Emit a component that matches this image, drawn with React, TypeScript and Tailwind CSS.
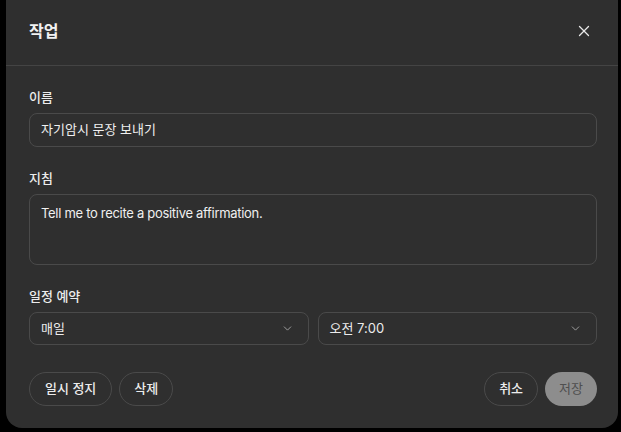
import { X, ChevronDown } from "lucide-react";

const font = { fontFamily: 'Inter, "Noto Sans CJK KR", sans-serif' };

function Field({ label, children }: { label: string; children: React.ReactNode }) {
  return (
    <div className="flex flex-col gap-[6px]">
      <div className="text-[13px] leading-[20px] font-medium text-[#ececec]">{label}</div>
      {children}
    </div>
  );
}

function SelectBox({ value }: { value: string }) {
  return (
    <div className="flex h-[33px] flex-1 items-center justify-between rounded-lg border border-[#4a4a4a] pl-[11px] pr-[14px] text-[13px] text-[#ececec]">
      <span>{value}</span>
      <ChevronDown size={13} strokeWidth={1.5} className="text-[#b4b4b4]" />
    </div>
  );
}

function Pill({ children, primary }: { children: React.ReactNode; primary?: boolean }) {
  return (
    <button
      className={
        primary
          ? "h-[34px] rounded-full bg-[#8d8d8d] px-[14px] text-[13px] text-[#4f4f4f]"
          : "h-[34px] rounded-full border border-[#4a4a4a] px-[14px] text-[13px] font-medium text-[#ececec]"
      }
    >
      {children}
    </button>
  );
}

export default function App() {
  return (
    <div className="h-[432px] w-[621px] overflow-hidden bg-black" style={font}>
      <div className="ml-[6px] flex h-[428px] w-[612px] flex-col rounded-b-2xl bg-[#2f2f2f]">
        {/* header */}
        <div className="flex h-[66px] shrink-0 items-center justify-between border-b border-[#444444] pb-[4px] pl-[23px] pr-[21px]">
          <h2 className="text-[16px] font-bold text-[#f2f2f2]">작업</h2>
          <button className="mr-[4px] text-[#e8e8e8]" aria-label="닫기">
            <X size={18} strokeWidth={1.75} />
          </button>
        </div>

        {/* body */}
        <div className="flex flex-1 flex-col pt-[21px] pb-[22px] pl-[23px] pr-[21px]">
          <div className="flex flex-col gap-[21px]">
            <Field label="이름">
              <div className="flex h-[34px] items-center rounded-lg border border-[#4a4a4a] px-[11px] text-[13px] text-[#f0f0f0]">
                자기암시 문장 보내기
              </div>
            </Field>
            <Field label="지침">
              <div className="h-[71px] rounded-lg border border-[#4a4a4a] px-[11px] pt-[9px] text-[13px] leading-[18px] tracking-[-0.3px] text-[#f0f0f0]">
                Tell me to recite a positive affirmation.
              </div>
            </Field>
            <Field label="일정 예약">
              <div className="flex gap-[9px]">
                <SelectBox value="매일" />
                <SelectBox value="오전 7:00" />
              </div>
            </Field>
          </div>

          <div className="mt-auto flex items-center justify-between">
            <div className="flex gap-[7px]">
              <Pill>
                <span className="px-[1px]">일시 정지</span>
              </Pill>
              <Pill>삭제</Pill>
            </div>
            <div className="flex gap-[7px]">
              <Pill>취소</Pill>
              <Pill primary>저장</Pill>
            </div>
          </div>
        </div>
      </div>
    </div>
  );
}
